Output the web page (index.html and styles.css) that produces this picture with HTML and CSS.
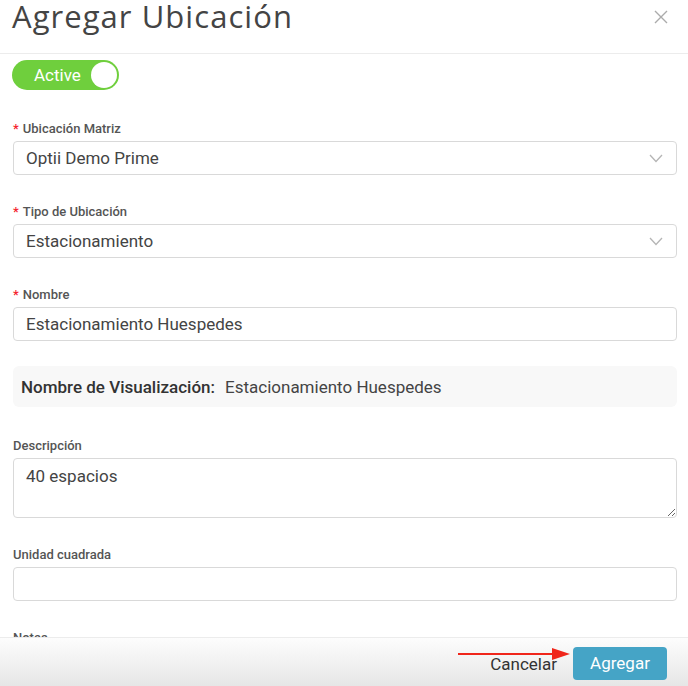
FILE: index.html
```html
<!doctype html>
<html lang="es">
    <head>
        <meta charset="utf-8">
        <link rel="stylesheet" href="styles.css">
    </head>
    <body>
        <div class="modal">
            <div class="modal-body">
                <header class="modal-header">
                    <h1 class="modal-title">Agregar Ubicación</h1>
                    <button class="close" type="button" aria-label="Cerrar">
                        <svg width="14" height="14" viewBox="0 0 14 14">
                            <path d="M1 1L13 13M13 1L1 13" stroke="#ababab" stroke-width="1.4" fill="none"/>
                        </svg>
                    </button>
                </header>

                <form class="form">
                    <div class="toggle">
                        <span class="toggle-label">Active</span>
                        <span class="toggle-knob"></span>
                    </div>

                    <div class="field">
                        <label class="field-label"><span class="req">*</span>Ubicación Matriz</label>
                        <div class="select">
                            <span>Optii Demo Prime</span>
                            <svg class="chevron" width="14" height="9" viewBox="0 0 14 9">
                                <path d="M1 1L7 7.5L13 1" stroke="#b5b5b5" stroke-width="1.3" fill="none"/>
                            </svg>
                        </div>
                    </div>

                    <div class="field">
                        <label class="field-label"><span class="req">*</span>Tipo de Ubicación</label>
                        <div class="select">
                            <span>Estacionamiento</span>
                            <svg class="chevron" width="14" height="9" viewBox="0 0 14 9">
                                <path d="M1 1L7 7.5L13 1" stroke="#b5b5b5" stroke-width="1.3" fill="none"/>
                            </svg>
                        </div>
                    </div>

                    <div class="field">
                        <label class="field-label"><span class="req">*</span>Nombre</label>
                        <input class="input" type="text" value="Estacionamiento Huespedes">
                    </div>

                    <div class="display-name">
                        <strong>Nombre de Visualización:</strong>
                        <span>Estacionamiento Huespedes</span>
                    </div>

                    <div class="field">
                        <label class="field-label">Descripción</label>
                        <textarea class="input textarea">40 espacios</textarea>
                    </div>

                    <div class="field">
                        <label class="field-label">Unidad cuadrada</label>
                        <input class="input" type="text">
                    </div>

                    <div class="field">
                        <label class="field-label">Notas</label>
                        <textarea class="input textarea"></textarea>
                    </div>
                </form>
            </div>

            <footer class="modal-footer">
                <button class="btn-link" type="button">Cancelar</button>
                <button class="btn-primary" type="button">Agregar</button>
                <svg class="arrow" width="112" height="12" viewBox="0 0 112 12">
                    <path d="M0 6H96" stroke="#f0261b" stroke-width="2"/>
                    <path d="M94 0L112 6L94 12Z" fill="#f0261b"/>
                </svg>
            </footer>
        </div>
    </body>
</html>
```

FILE: styles.css
```css
* {
    box-sizing: border-box;
}
html, body {
    margin: 0;
    height: 100%;
}
body {
    font-family: Roboto, 'Noto Sans', sans-serif;
    color: #444;
    background: #fff;
}

.modal {
    display: flex;
    flex-direction: column;
    height: 686px;
    width: 688px;
}
.modal-body {
    flex: 1;
    overflow: hidden;
}
.modal-header {
    display: flex;
    align-items: flex-start;
    justify-content: space-between;
    height: 54px;
    border-bottom: 1px solid #ececec;
    padding: 0 20px 0 12px;
}
.modal-title {
    margin: 0;
    font-family: 'Open Sans', sans-serif;
    font-weight: 400;
    font-size: 31px;
    line-height: 32px;
    letter-spacing: 1.05px;
    color: #444;
}
.close {
    border: none;
    background: none;
    padding: 0;
    margin-top: 10px;
    line-height: 0;
}

.form {
    padding: 6px 11px 0 13px;
}

.toggle {
    display: flex;
    align-items: center;
    justify-content: space-between;
    width: 107px;
    height: 30px;
    margin-left: -1px;
    padding: 0 2px 0 22px;
    border-radius: 15px;
    background: #6fcf3d;
}
.toggle-label {
    color: #fff;
    font-size: 17px;
}
.toggle-knob {
    width: 26px;
    height: 26px;
    border-radius: 50%;
    background: #fff;
}

.field {
    margin-top: 28px;
}
.toggle + .field {
    margin-top: 30px;
}
.display-name + .field {
    margin-top: 30px;
}
.field-label {
    display: block;
    font-size: 13px;
    font-weight: 500;
    line-height: 18px;
    margin-bottom: 3px;
    color: #555;
}
.req {
    color: #f5222d;
    margin-right: 4px;
}

.select,
.input {
    display: flex;
    align-items: center;
    justify-content: space-between;
    width: 100%;
    height: 34px;
    padding: 0 12px;
    border: 1px solid #d9d9d9;
    border-radius: 4px;
    font-family: Roboto, sans-serif;
    font-size: 17px;
    color: #444;
    background: #fff;
}
.chevron {
    margin-right: 1px;
}
.textarea {
    display: block;
    height: 60px;
    padding: 6px 12px;
    resize: both;
    line-height: 22px;
}

.display-name {
    display: flex;
    align-items: center;
    gap: 10px;
    height: 41px;
    margin-top: 25px;
    padding: 0 8px;
    border-radius: 6px;
    background: #f8f8f8;
    font-size: 17px;
}
.display-name strong {
    font-weight: 500;
    color: #333;
}

.modal-footer {
    position: relative;
    display: flex;
    align-items: center;
    justify-content: flex-end;
    gap: 16px;
    height: 49px;
    padding: 0 21px 0 0;
    border-top: 1px solid #ececec;
    background: linear-gradient(#fdfdfd, #e6e6e6);
}
.btn-link {
    border: none;
    background: none;
    padding: 0;
    margin-top: 3px;
    font-family: Roboto, sans-serif;
    font-size: 17px;
    color: #333;
}
.btn-primary {
    width: 94px;
    height: 33px;
    margin-top: 2px;
    border: none;
    border-radius: 4px;
    background: #45a4c6;
    color: #fff;
    font-family: Roboto, sans-serif;
    font-size: 17px;
}
.arrow {
    position: absolute;
    left: 458px;
    top: 10px;
}
```
